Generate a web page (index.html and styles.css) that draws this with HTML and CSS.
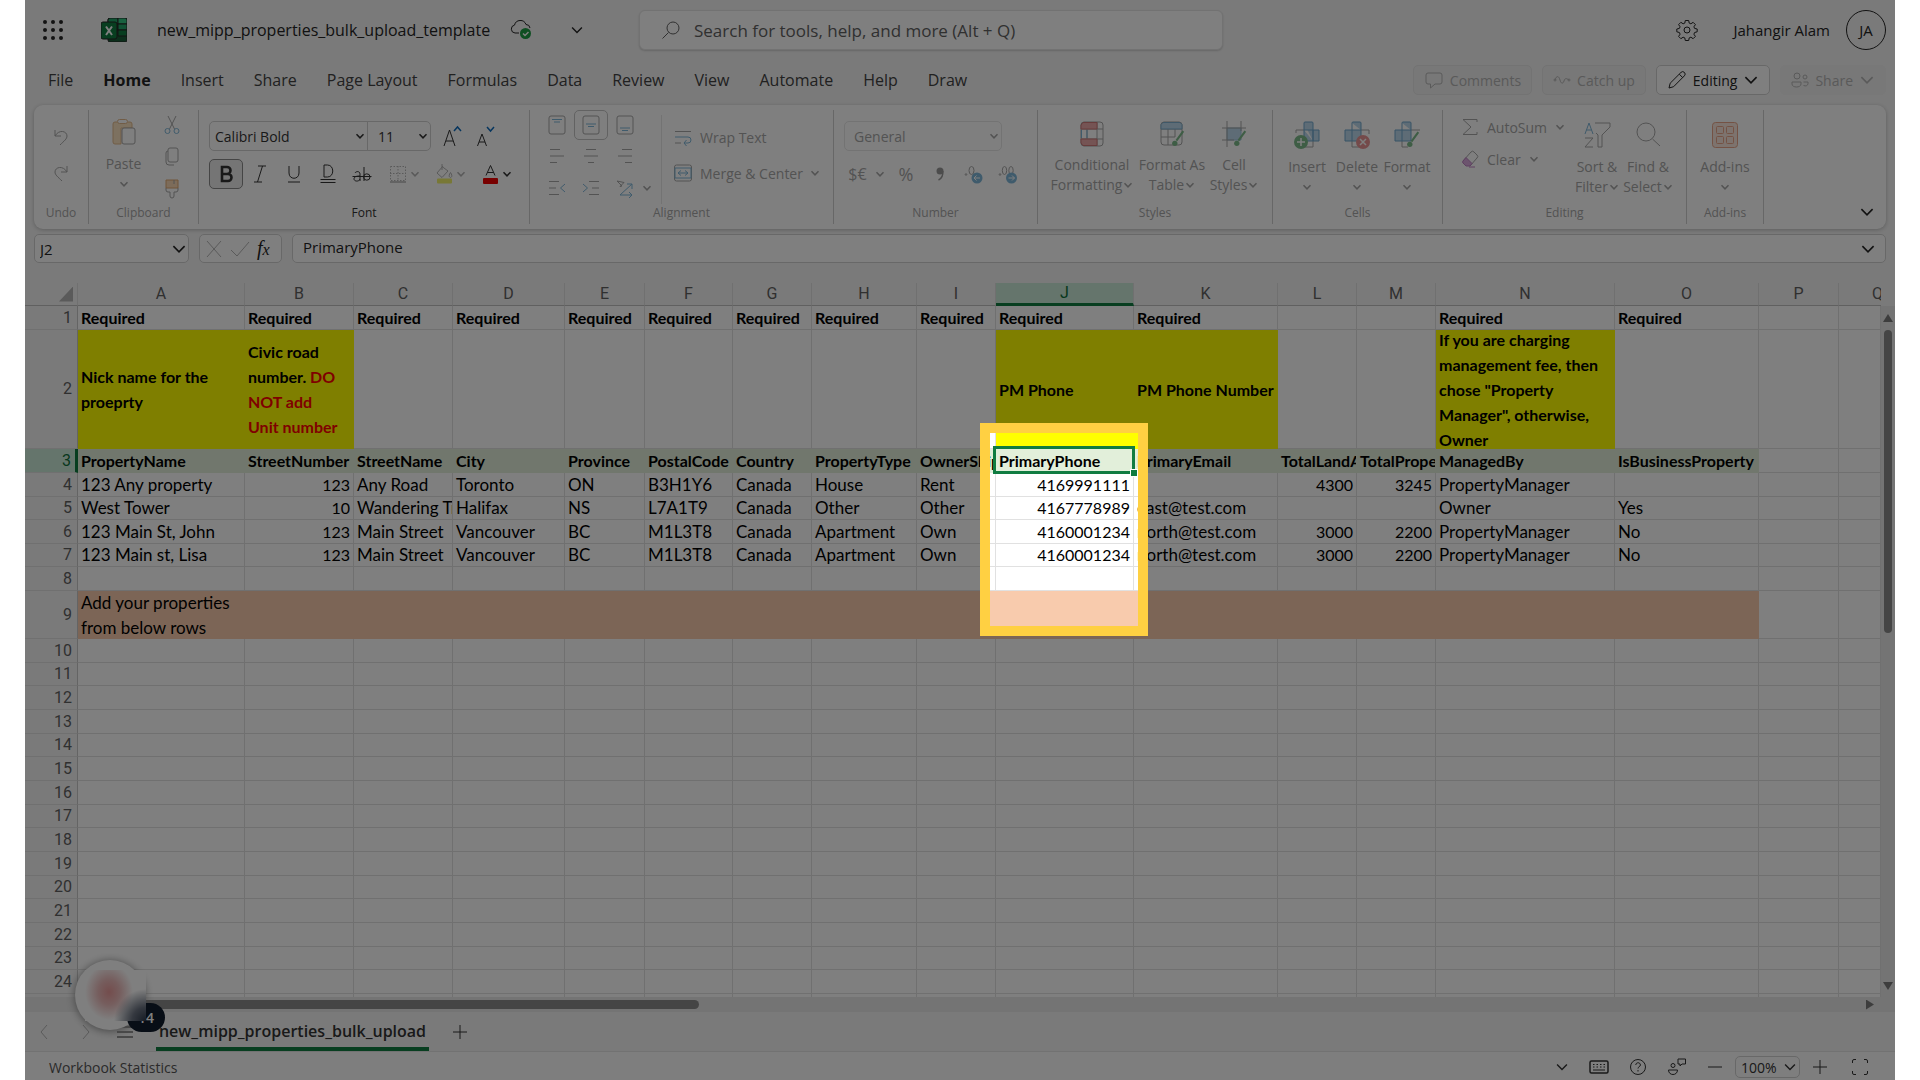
FILE: index.html
```html
<!DOCTYPE html>
<html lang="en">
<head>
  <meta charset="UTF-8" />
  <meta name="viewport" content="width=device-width, initial-scale=1.0" />
  <title>new_mipp_properties_bulk_upload_template</title>
  <link rel="stylesheet" href="styles.css">
</head>
<body>
  <svg class="sprite" aria-hidden="true">
    <symbol id="chev" viewBox="0 0 10 10"><path d="M1.5 3.2 5 6.8 8.500 3.200" /></symbol>
    <symbol id="brush" viewBox="0 0 12 16"><path d="M11 1 4.500 10" stroke="#7dbb8a" stroke-width="2" /><circle cx="3" cy="12.500" r="2.500" fill="#7dbb8a" stroke="none" /></symbol>
  </svg>

  <div class="app">
    <header class="topbar">
      <button class="icon-btn waffle" aria-label="App launcher">
        <svg width="22" height="22" viewBox="0 0 22 22" class="solid"><circle cx="3" cy="3" r="2"/><circle cx="11" cy="3" r="2"/><circle cx="19" cy="3" r="2"/><circle cx="3" cy="11" r="2"/><circle cx="11" cy="11" r="2"/><circle cx="19" cy="11" r="2"/><circle cx="3" cy="19" r="2"/><circle cx="11" cy="19" r="2"/><circle cx="19" cy="19" r="2"/></svg>
      </button>
      <svg class="logo" width="26" height="24" viewBox="0 0 26 24" stroke="none">
        <rect x="7" width="19" height="24" rx="2" fill="#185c37"/>
        <path d="M9 0h8v6H7V2a2 2 0 0 1 2-2z" fill="#21a366"/><path d="M17 0h7a2 2 0 0 1 2 2v4h-9z" fill="#33c481"/>
        <path d="M7 6h10v6H7z" fill="#107c41"/><path d="M17 6h9v6h-9z" fill="#21a366"/><path d="M17 12h9v6h-9z" fill="#107c41"/>
        <rect y="4" width="16" height="17" rx="2" fill="#107c41"/>
        <path d="M5 8.500 11 17M11 8.500 5 17" stroke="#fff" stroke-width="2"/>
      </svg>
      <span class="doc-name">new_mipp_properties_bulk_upload_template</span>
      <svg class="cloud" width="22" height="22" viewBox="0 0 22 22"><path d="M9 14H5a4 4 0 0 1-.5-7.900A6 6 0 0 1 16 5.500 4 4 0 0 1 20 9"/><circle cx="15.500" cy="14.500" r="5.500" fill="#1e9e45" stroke="none"/><path d="m13 14.500 2 2 3.500-3.500" stroke="#fff" stroke-width="1.500"/></svg>
      <button class="icon-btn doc-menu" aria-label="File options"><svg width="14" height="14"><use href="#chev"/></svg></button>
      <label class="search">
        <svg width="20" height="20" viewBox="0 0 20 20"><circle cx="12" cy="8" r="6"/><path d="M7.500 12.500 1.500 18.500"/></svg>
        <input type="text" aria-label="Search" placeholder="Search for tools, help, and more (Alt + Q)">
      </label>
      <button class="icon-btn gear" aria-label="Settings">
        <svg width="22" height="22" viewBox="0 0 22 22"><circle cx="11" cy="11" r="3"/><path d="M9.300 1.500h3.400l.5 2.600 1.700.7 2.200-1.500 2.300 2.300-1.500 2.200.7 1.600 2.600.6v2.800l-2.600.7-.7 1.700 1.500 2.200-2.300 2.300-2.200-1.500-1.700.7-.5 2.600H9.300l-.5-2.600-1.700-.7-2.200 1.500-2.300-2.300 1.500-2.200-.7-1.700-2.600-.7V10l2.600-.6.7-1.600-1.500-2.200 2.300-2.300 2.200 1.500 1.700-.7z" stroke-linejoin="round"/></svg>
      </button>
      <span class="user">Jahangir Alam</span>
      <button class="avatar" aria-label="Account">JA</button>
    </header>

    <nav class="tabs">
      <a href="#">File</a><a href="#" class="active">Home</a><a href="#">Insert</a><a href="#">Share</a><a href="#">Page Layout</a><a href="#">Formulas</a><a href="#">Data</a><a href="#">Review</a><a href="#">View</a><a href="#">Automate</a><a href="#">Help</a><a href="#">Draw</a>
      <div class="tab-actions">
        <button class="off"><svg width="20" height="20" viewBox="0 0 20 20"><path d="M4 3h12a2 2 0 0 1 2 2v7a2 2 0 0 1-2 2h-5l-4.500 4v-4H4a2 2 0 0 1-2-2V5a2 2 0 0 1 2-2z"/></svg>Comments</button>
        <button class="off"><svg width="18" height="18" viewBox="0 0 18 18"><circle cx="2" cy="9" r="1"/><circle cx="16" cy="9" r="1"/><path d="M2 9c1.500-5 4-4 5 0s3 4 4 1 2-3 5-1"/></svg>Catch up</button>
        <button class="editing"><svg width="20" height="20" viewBox="0 0 20 20"><path d="m2 18 1.200-4.800L14 2.400a2.200 2.200 0 0 1 3.400 3.400L6.600 16.700 2 18zM12.300 4.200l3.400 3.400"/></svg>Editing<svg width="16" height="16"><use href="#chev"/></svg></button>
        <button class="off share"><svg width="18" height="18" viewBox="0 0 18 18"><circle cx="6" cy="5" r="3"/><circle cx="14" cy="6" r="2"/><path d="M1 11h9v2c0 4-9 4-9 0zM12.500 11H17v1.500c0 2-2 3-4.500 2"/></svg>Share<svg width="16" height="16"><use href="#chev"/></svg></button>
      </div>
    </nav>

    <section class="ribbon">
      <div class="group g-undo">
        <div class="body">
          <button aria-label="Undo"><svg width="20" height="20" viewBox="0 0 20 20"><path d="M4 3v6h6M4 9c4-7 12-5 12 0 0 3-3 5-7 9"/></svg></button>
          <button aria-label="Redo"><svg width="20" height="20" viewBox="0 0 20 20"><path d="M16 3v6h-6M16 9C12 2 4 4 4 9c0 3 3 5 7 9"/></svg></button>
        </div>
        <h2>Undo</h2>
      </div>

      <div class="group g-clip">
        <div class="body">
          <button class="big"><svg width="26" height="28" viewBox="0 0 26 28"><path d="M6 4H4a2 2 0 0 0-2 2v18a2 2 0 0 0 2 2h6V10h11V6a2 2 0 0 0-2-2h-2" fill="#fbe3c0" stroke="#e3b98c"/><rect x="6.500" y="1.500" width="10" height="4" rx="2" stroke="#e3b98c" fill="#fff"/><rect x="11" y="10" width="13" height="16" rx="2" fill="#fff"/></svg><span>Paste</span><svg class="chev"><use href="#chev"/></svg></button>
          <div class="clip-side">
            <button aria-label="Cut"><svg width="20" height="20" viewBox="0 0 20 20"><path d="M6 1 12.500 14M14 1 7.500 14"/><circle cx="5.500" cy="16" r="2.500" stroke="#7fb6d8"/><circle cx="14.500" cy="16" r="2.500" stroke="#7fb6d8"/></svg></button>
            <button aria-label="Copy"><svg width="20" height="20" viewBox="0 0 20 20"><rect x="6" y="1" width="10" height="14" rx="2"/><path d="M6 4a2 2 0 0 0-2 2v9a3 3 0 0 0 3 3h5"/></svg></button>
            <button aria-label="Format painter"><svg width="20" height="20" viewBox="0 0 20 20"><path d="M4 1h12v8H4z" fill="#fbd9b4" stroke="#e0a870"/><path d="M12 1v4M4 9v2a2 2 0 0 0 2 2h2v4a2 2 0 0 0 4 0v-4h2a2 2 0 0 0 2-2V9"/></svg></button>
          </div>
        </div>
        <h2>Clipboard</h2>
      </div>

      <div class="group g-font">
        <div class="body">
          <div class="line">
            <span class="select font-name"><select aria-label="Font"><option>Calibri Bold</option></select><svg class="chev"><use href="#chev"/></svg></span>
            <span class="select font-size"><select aria-label="Font size"><option>11</option></select><svg class="chev"><use href="#chev"/></svg></span>
            <button aria-label="Grow font"><svg width="22" height="24" viewBox="0 0 22 24"><path d="M3 22 8.500 6 14 22M5 17h7"/><path d="m13 7 3.500-4L20 7" stroke="#0f6cbd" stroke-width="1.500"/></svg></button>
            <button aria-label="Shrink font"><svg width="22" height="24" viewBox="0 0 22 24"><path d="M2.500 22 7 10l4.500 12M4 18h6"/><path d="m12 3 3.500 4L19 3" stroke="#0f6cbd" stroke-width="1.500"/></svg></button>
          </div>
          <div class="line">
            <button class="pressed" aria-label="Bold"><svg width="20" height="20" viewBox="0 0 20 20"><path d="M6 3h5a3.500 3.500 0 0 1 0 7H6zM6 10h6a3.500 3.500 0 0 1 0 7H6z" stroke-width="2.600"/></svg></button>
            <button aria-label="Italic"><svg width="20" height="20" viewBox="0 0 20 20"><path d="M8 2h8M4 18h8M12.500 2 7.500 18"/></svg></button>
            <button aria-label="Underline"><svg width="20" height="20" viewBox="0 0 20 20"><path d="M5 2v7c0 7 10 7 10 0V2M4 18h12"/></svg></button>
            <button aria-label="Double underline"><svg width="20" height="20" viewBox="0 0 20 20"><path d="M6 1h3.500c7 0 7 12 0 12H6zM2.500 15.500h15M2.500 18.500h15"/></svg></button>
            <button aria-label="Strikethrough"><svg width="20" height="20" viewBox="0 0 20 20"><path d="M3 9c1-2 5-2 5 1v7M8 12c-3 0-6 .5-6 3s5 3 6 0M12 3v14"/><circle cx="14.800" cy="13" r="3.200"/><path d="M.5 12.500h19"/></svg></button>
            <button class="off pair" aria-label="Borders"><svg width="20" height="20" viewBox="0 0 20 20"><path d="M2.500 2.500h15v14h-15zM10 2v14M2 9.500h16" stroke-dasharray="1.500 1.500"/><path d="M2 18h16" stroke-width="1.500"/></svg><svg class="chev"><use href="#chev"/></svg></button>
            <button class="off pair" aria-label="Fill color"><svg width="20" height="20" viewBox="0 0 20 20"><path d="m9 2-6 7 5 4.500 6-6.500-6-4.500M8 0v6"/><path d="M16.500 8.500c3 4.500 0 5 0 5s-3-.5 0-5z"/><rect x="3" y="14.500" width="15" height="5" rx="1" fill="#f0f06c" stroke="none"/></svg><svg class="chev"><use href="#chev"/></svg></button>
            <button class="pair" aria-label="Font color"><svg width="20" height="20" viewBox="0 0 20 20"><path d="m6 11.500 4.500-10 4.500 10M7.500 8.500h6"/><rect x="3" y="14" width="15" height="6" rx="1" fill="#f00000" stroke="none"/></svg><svg class="chev"><use href="#chev"/></svg></button>
          </div>
        </div>
        <h2>Font</h2>
      </div>

      <div class="group g-align">
        <div class="body">
          <div class="align-grid">
            <button aria-label="Top align"><svg width="20" height="20" viewBox="0 0 20 20"><rect x="2" y="1" width="16" height="18" rx="2"/><path d="M5 4.500h10M7 7h6" stroke="#7fb6d8"/></svg></button>
            <button class="boxed" aria-label="Middle align"><svg width="20" height="20" viewBox="0 0 20 20"><rect x="2" y="1" width="16" height="18" rx="2"/><path d="M5 9h10M7 11.500h6" stroke="#7fb6d8"/></svg></button>
            <button aria-label="Bottom align"><svg width="20" height="20" viewBox="0 0 20 20"><rect x="2" y="1" width="16" height="18" rx="2"/><path d="M5 13h10M7 15.500h6" stroke="#7fb6d8"/></svg></button>
            <span></span>
            <button aria-label="Align left"><svg width="20" height="20" viewBox="0 0 20 20"><path d="M3 3.500h10M3 10h14M3 16.500h7"/></svg></button>
            <button aria-label="Align center"><svg width="20" height="20" viewBox="0 0 20 20"><path d="M5 3.500h10M3 10h14M7 16.500h6"/></svg></button>
            <button aria-label="Align right"><svg width="20" height="20" viewBox="0 0 20 20"><path d="M7 3.500h10M3 10h14M10 16.500h7"/></svg></button>
            <span></span>
            <button aria-label="Decrease indent"><svg width="20" height="20" viewBox="0 0 20 20"><path d="M2 3.500h10M2 10h7M2 16.500h10"/><path d="m18 6-4.500 4 4.500 4" stroke="#7fb6d8"/></svg></button>
            <button aria-label="Increase indent"><svg width="20" height="20" viewBox="0 0 20 20"><path d="M8 3.500h10M11 10h7M8 16.500h10"/><path d="m2 6 4.500 4L2 14" stroke="#7fb6d8"/></svg></button>
            <button aria-label="Orientation"><svg width="20" height="20" viewBox="0 0 20 20"><path d="m7 8-5-5 7 1.500-4 4z"/><path d="M5 17 17 6M12 6h5v5M5 17h12M14 14l3 3-3 3" stroke="#7fb6d8"/></svg></button>
            <svg class="chev"><use href="#chev"/></svg>
          </div>
          <div class="align-text">
            <button><svg width="20" height="20" viewBox="0 0 20 20"><path d="M2 4.500h16M2 16h6"/><path d="M2 10h13a3 3 0 0 1 0 6h-4M13.500 13 11 16l2.500 3" stroke="#7fb6d8"/></svg>Wrap Text</button>
            <button><svg width="20" height="20" viewBox="0 0 20 20"><rect x="1.500" y="2" width="17" height="16" rx="2"/><path d="M2 5h16v10H2zM5 10h10M8 7.500 5 10l3 2.500M12 7.500l3 2.500-3 2.500" stroke="#7fb6d8"/></svg>Merge &amp; Center<svg class="chev"><use href="#chev"/></svg></button>
          </div>
        </div>
        <h2>Alignment</h2>
      </div>

      <div class="group g-num">
        <div class="body">
          <div class="line"><span class="select num-format"><select aria-label="Number format"><option>General</option></select><svg class="chev"><use href="#chev"/></svg></span></div>
          <div class="line num-line">
            <button class="currency">$€<svg class="chev"><use href="#chev"/></svg></button>
            <button class="pct">%</button>
            <button aria-label="Comma style"><svg width="20" height="20" viewBox="0 0 20 20"><circle cx="10" cy="7" r="3.500" fill="#999" stroke="none"/><path d="M12.800 7c.4 5-1 7.500-4.300 9" stroke="#999" stroke-width="1.500"/></svg></button>
            <button aria-label="Decrease decimal"><svg width="20" height="20" viewBox="0 0 20 20"><circle cx="2" cy="10.500" r=".8"/><ellipse cx="7.500" cy="6.500" rx="2.500" ry="4"/><circle cx="13" cy="14" r="5.500" fill="#7fb6d8" stroke="none"/><path d="M16 14h-6m2.500-2.500L10 14l2.500 2.500" stroke="#fff"/></svg></button>
            <button aria-label="Increase decimal"><svg width="20" height="20" viewBox="0 0 20 20"><circle cx="2" cy="10.500" r=".8"/><ellipse cx="6.500" cy="6.500" rx="2.200" ry="4"/><ellipse cx="13" cy="6.500" rx="2.200" ry="4"/><circle cx="13.500" cy="14" r="5.500" fill="#7fb6d8" stroke="none"/><path d="M10.500 14h6M14 11.500l2.500 2.500-2.500 2.500" stroke="#fff"/></svg></button>
          </div>
        </div>
        <h2>Number</h2>
      </div>

      <div class="group g-styles">
        <div class="body">
          <button class="big w80"><svg width="26" height="26" viewBox="0 0 26 26"><rect x="2" y="1" width="22" height="24" rx="3"/><path d="M8 8v10M18 1v24M2 8h22M2 18h22"/><path d="M4 1.500h14V8H2V4zM2 18h16v6.500H4L2 22z" fill="#eba9a9" stroke="#d07878"/><path d="M2.500 9v8M8 9v8" stroke="#7fb6d8"/></svg><span>Conditional<br>Formatting<svg class="chev"><use href="#chev"/></svg></span></button>
          <button class="big w80"><svg width="26" height="26" viewBox="0 0 26 26"><rect x="2" y="1" width="21" height="23" rx="3"/><path d="M2 8h21M2 16h14M9 8v16M16 8v8"/><path d="M4 1.500h17l2 2V8H2V3.500z" fill="#bcd9ec" stroke="#7fb0d0"/><use href="#brush" x="12" y="9" width="14" height="17"/></svg><span>Format As<br>Table<svg class="chev"><use href="#chev"/></svg></span></button>
          <button class="big w44"><svg width="26" height="26" viewBox="0 0 26 26"><path d="M6 7h14v12H6z" fill="#bcd9ec" stroke="#9cc4de"/><path d="M1 7h24M1 19h12M6 0v26M20 0v10"/><use href="#brush" x="12" y="9" width="14" height="17"/></svg><span>Cell<br>Styles<svg class="chev"><use href="#chev"/></svg></span></button>
        </div>
        <h2>Styles</h2>
      </div>

      <div class="group g-cells">
        <div class="body">
          <button class="big w50"><svg width="28" height="28" viewBox="0 0 28 28"><path d="M3 12V9h8M11 20v6h9v-6"/><path d="M11 2a1 1 0 0 1 1-1h7a1 1 0 0 1 1 1v7h6v11h-6M11 2v18h9M11 9h9v11M20 9v11" fill="#bcd9ec" stroke="#6fa6cc"/><circle cx="8" cy="21" r="7" fill="#7dbb8a" stroke="none"/><path d="M8 17v8M4 21h8" stroke="#fff" stroke-width="1.500"/></svg><span>Insert</span><svg class="chev"><use href="#chev"/></svg></button>
          <button class="big w50"><svg width="28" height="28" viewBox="0 0 28 28"><path d="M18 9h8v4M9 20v6h8"/><path d="M9 2a1 1 0 0 1 1-1h7a1 1 0 0 1 1 1v18H2V9h16M9 2v18" fill="#bcd9ec" stroke="#6fa6cc"/><circle cx="20" cy="21" r="7" fill="#e89595" stroke="none"/><path d="m17 18 6 6M23 18l-6 6" stroke="#fff" stroke-width="1.500"/></svg><span>Delete</span><svg class="chev"><use href="#chev"/></svg></button>
          <button class="big w50"><svg width="28" height="28" viewBox="0 0 28 28"><path d="M18 9h9M9 20v6h6"/><path d="M9 2a1 1 0 0 1 1-1h7a1 1 0 0 1 1 1v18H2V9h16M9 2v18" fill="#bcd9ec" stroke="#6fa6cc"/><use href="#brush" x="13" y="10" width="14" height="17"/></svg><span>Format</span><svg class="chev"><use href="#chev"/></svg></button>
        </div>
        <h2>Cells</h2>
      </div>

      <div class="group g-edit">
        <div class="body">
          <div class="edit-text">
            <button><svg width="18" height="18" viewBox="0 0 18 18"><path d="M16 4V1.500H2L10 9l-8 7.500h14V14"/></svg>AutoSum<svg class="chev"><use href="#chev"/></svg></button>
            <button><svg width="18" height="18" viewBox="0 0 18 18"><path d="m2 11 8-9a2 2 0 0 1 3 0l3 3a2 2 0 0 1 0 3l-7 8"/><path d="m2 11 3-3.500 6 6L9 16H5l-3-3a1.500 1.500 0 0 1 0-2zM8 17h6" fill="#d9a8dc" stroke="#bd80c2"/></svg>Clear<svg class="chev"><use href="#chev"/></svg></button>
          </div>
          <button class="big w50"><svg width="28" height="28" viewBox="0 0 28 28"><path d="M12 2h15v4l-8 8v12h-4V14l-2-2"/><path d="m2 13 4-11 4 11M3.500 9h5" stroke="#7fb6d8"/><path d="M2 17h8L2 26h8"/></svg><span>Sort &amp;<br>Filter<svg class="chev"><use href="#chev"/></svg></span></button>
          <button class="big w50"><svg width="28" height="28" viewBox="0 0 28 28"><circle cx="12" cy="11" r="9"/><path d="m18.500 18 7.500 7"/></svg><span>Find &amp;<br>Select<svg class="chev"><use href="#chev"/></svg></span></button>
        </div>
        <h2>Editing</h2>
      </div>

      <div class="group g-addins">
        <div class="body">
          <button class="big"><svg width="28" height="28" viewBox="0 0 28 28" class="orange"><rect x="1.500" y="1.500" width="25" height="25" rx="3" fill="#fbe6dc"/><rect x="5.500" y="5.500" width="7" height="7" rx="1"/><rect x="15.500" y="5.500" width="7" height="7" rx="1"/><rect x="5.500" y="15.500" width="7" height="7" rx="1"/><rect x="15.500" y="15.500" width="7" height="7" rx="1"/></svg><span>Add-ins</span><svg class="chev"><use href="#chev"/></svg></button>
        </div>
        <h2>Add-ins</h2>
      </div>
      <button class="collapse" aria-label="Ribbon display options"><svg width="16" height="16"><use href="#chev"/></svg></button>
    </section>

    <section class="formula-row">
      <label class="name-box"><input type="text" aria-label="Name box" value="J2"><svg width="16" height="16"><use href="#chev"/></svg></label>
      <div class="fx">
        <button aria-label="Cancel" class="off"><svg width="18" height="18" viewBox="0 0 18 18"><path d="m2 1 14 16M16 1 2 17"/></svg></button>
        <button aria-label="Enter" class="off"><svg width="20" height="18" viewBox="0 0 20 18"><path d="m1 10 6 6L19 2"/></svg></button>
        <button aria-label="Insert function" class="fx-btn">f<sub>x</sub></button>
      </div>
      <label class="formula"><input type="text" aria-label="Formula bar" value="PrimaryPhone"><svg width="16" height="16"><use href="#chev"/></svg></label>
    </section>

    <main class="sheet">
      <div class="grid-wrap">
        <table class="grid">
          <colgroup>
            <col class="c-row"><col class="c-a"><col class="c-b"><col class="c-c"><col class="c-d"><col class="c-e"><col class="c-f"><col class="c-g"><col class="c-h"><col class="c-i"><col class="c-j"><col class="c-k"><col class="c-l"><col class="c-m"><col class="c-n"><col class="c-o"><col class="c-p"><col>
          </colgroup>
          <thead><tr id="cols"><th class="corner"></th></tr></thead>
          <tbody id="rows"></tbody>
        </table>
      </div>
      <div class="vscroll"><i class="tri up"></i><i class="thumb"></i><i class="tri down"></i></div>
    </main>
    <div class="hscroll"><i class="thumb"></i><i class="tri right"></i></div>

    <div class="sheet-tabs">
      <button class="off" aria-label="Previous sheet"><svg width="16" height="16" viewBox="0 0 16 16"><path d="m10 1-6 7 6 7"/></svg></button>
      <button class="off" aria-label="Next sheet"><svg width="16" height="16" viewBox="0 0 16 16"><path d="m6 1 6 7-6 7"/></svg></button>
      <button class="all-sheets" aria-label="All sheets"><svg width="16" height="16" viewBox="0 0 16 16"><path d="M0 3h16M0 8h16M0 13h16"/></svg></button>
      <a href="#" class="sheet-tab">new_mipp_properties_bulk_upload</a>
      <button class="add" aria-label="Add sheet"><svg width="16" height="16" viewBox="0 0 16 16"><path d="M8 1v14M1 8h14"/></svg></button>
    </div>

    <footer class="status">
      <span>Workbook Statistics</span>
      <div class="status-right">
        <button aria-label="More"><svg width="14" height="14"><use href="#chev"/></svg></button>
        <button aria-label="Keyboard"><svg width="20" height="16" viewBox="0 0 20 16"><rect x="1" y="2" width="18" height="12" rx="1.500" stroke-width="1.500"/><path d="M4 5.500h12M4 8h12" stroke-dasharray="1.500 2"/><path d="M4 11h12"/></svg></button>
        <button aria-label="Help"><svg width="18" height="18" viewBox="0 0 18 18"><circle cx="9" cy="9" r="7.500"/><path d="M6.800 7c0-3 4.600-3 4.600 0 0 1.800-2.400 1.600-2.400 3.500M9 12v1.500"/></svg></button>
        <button aria-label="Feedback"><svg width="20" height="18" viewBox="0 0 20 18"><circle cx="6" cy="7.500" r="2"/><path d="M1.500 12h9c0 6-9 6-9 0zM11 1h7.500v5H15l-2 2V6h-2z"/></svg></button>
        <button aria-label="Zoom out"><svg width="16" height="16" viewBox="0 0 16 16"><path d="M1 8h14"/></svg></button>
        <span class="select zoom"><select aria-label="Zoom"><option>100%</option></select><svg width="14" height="14"><use href="#chev"/></svg></span>
        <button aria-label="Zoom in"><svg width="16" height="16" viewBox="0 0 16 16"><path d="M8 1v14M1 8h14"/></svg></button>
        <button aria-label="Full screen" class="full"><svg width="18" height="18" viewBox="0 0 18 18"><path d="M1.500 5V3A1.500 1.500 0 0 1 3 1.500h2M13 1.500h2A1.500 1.500 0 0 1 16.500 3v2M16.500 13v2a1.500 1.500 0 0 1-1.500 1.500h-2M5 16.500H3A1.500 1.500 0 0 1 1.500 15v-2"/></svg></button>
      </div>
    </footer>

    <div class="bubble"><span class="bubble-count">14</span><span class="bubble-blur"></span></div>
    <div class="spotlight"></div>
  </div>

  <script src="script.js"></script>
</body>
</html>
```
FILE: styles.css
```css
* {
  box-sizing: border-box;
}
body {
  margin: 0;
  padding: 0 25px;
  background: #fff;
  font-family: 'Open Sans', 'Noto Sans', sans-serif;
  font-size: 14px;
  color: #242424;
}
svg {
  fill: none;
  stroke: currentColor;
  flex: none;
}
.solid {
  fill: currentColor;
  stroke: none;
}
.sprite {
  display: none;
}
button {
  display: flex;
  align-items: center;
  justify-content: center;
  padding: 0;
  border: none;
  background: none;
  font: inherit;
  color: inherit;
}
input, select {
  border: none;
  background: none;
  font: inherit;
  color: inherit;
  outline: none;
  min-width: 0;
  appearance: none;
}
a {
  color: inherit;
  text-decoration: none;
}
.app {
  position: relative;
  overflow: hidden;
  height: 100vh;
  display: flex;
  flex-direction: column;
  background: #f5f5f5;
}
.chev {
  width: 10px;
  height: 10px;
  stroke-width: 1.5;
}
.off {
  color: #b4b4b4;
}

/* title bar */
.topbar {
  display: flex;
  align-items: center;
  height: 60px;
  padding: 0 9px 0 17px;
}
.logo {
  margin-left: 37px;
}
.doc-name {
  width: 341px;
  margin-left: 30px;
  font-size: 16px;
  white-space: nowrap;
}
.cloud {
  margin-left: 12px;
}
.doc-menu {
  margin-left: 38px;
}
.search {
  display: flex;
  align-items: center;
  gap: 13px;
  width: 584px;
  height: 40px;
  margin-left: 55px;
  padding: 0 21px;
  background: #fff;
  border: 1px solid #e4e4e4;
  border-radius: 6px;
  color: #616161;
  box-shadow: 0 1px 2px #ccc;
}
.search input {
  flex: 1;
  padding: 0;
  font-size: 17px;
}
.search input::placeholder {
  color: #616161;
}
.gear {
  margin-left: auto;
}
.user {
  margin-left: 35px;
  font-size: 15px;
}
.avatar {
  width: 40px;
  height: 40px;
  margin-left: 16px;
  border: 1px solid #242424;
  border-radius: 50%;
  font-size: 15px;
}

/* ribbon tabs */
.tabs {
  display: flex;
  align-items: center;
  gap: 30px;
  height: 45px;
  padding: 0 9px 5px 23px;
  font-size: 16px;
  color: #424242;
}
.tabs .active {
  font-weight: 700;
  color: #242424;
}
.tab-actions {
  display: flex;
  gap: 10px;
  margin-left: auto;
  font-size: 14px;
}
.tab-actions button {
  gap: 6px;
  height: 30px;
  padding: 0 10px;
  border: 1px solid #e6e6e6;
  border-radius: 5px;
  background: #f0f0f0;
}
.tab-actions .editing {
  background: #fff;
  border-color: #d1d1d1;
  color: #242424;
}
.tab-actions .share {
  border-color: #f0f0f0;
}

/* ribbon */
.ribbon {
  display: flex;
  flex: none;
  height: 124px;
  margin: 0 9px;
  padding: 5px 0;
  background: #fff;
  border-radius: 9px;
  box-shadow: 0 1px 4px #bbb;
  color: #a6a6a6;
}
.group {
  display: flex;
  flex-direction: column;
  flex: none;
  border-right: 1px solid #cecece;
}
.group h2 {
  margin: 0 0 2px;
  font-size: 12px;
  line-height: 18px;
  font-weight: 400;
  text-align: center;
}
.body {
  display: flex;
  flex: 1;
}
.g-undo { width: 55px; }
.g-clip { width: 110px; }
.g-font { width: 331px; color: #333; }
.g-align { width: 304px; }
.g-num { width: 204px; }
.g-styles { width: 235px; }
.g-cells { width: 170px; }
.g-edit { width: 244px; }
.g-addins { width: 77px; }

.g-undo .body {
  flex-direction: column;
  align-items: center;
  gap: 16px;
  padding-top: 17px;
}
.g-clip .body {
  gap: 18px;
  padding-left: 14px;
}
.big {
  flex-direction: column;
  justify-content: flex-start;
  padding-top: 11px;
  font-size: 14px;
  line-height: 20px;
  white-space: nowrap;
}
.big > svg:first-child {
  margin-bottom: 8px;
}
.big .chev {
  margin-left: 1px;
}
.big > .chev {
  margin: 5px 0 0;
}
.g-clip .big {
  width: 41px;
  padding-top: 8px;
}
.clip-side {
  display: flex;
  flex-direction: column;
  gap: 12px;
  padding-top: 5px;
}

.g-font .body, .g-num .body {
  flex-direction: column;
  gap: 8px;
  padding: 11px 0 0 10px;
}
.line {
  display: flex;
  align-items: center;
  height: 30px;
}
.line button {
  width: 34px;
  height: 30px;
}
.line .pair {
  width: 46px;
  gap: 2px;
  padding-left: 4px;
}
.line .pressed {
  background: #ebebeb;
  border: 1px solid #8a8a8a;
  border-radius: 5px;
}
.select {
  display: grid;
  align-items: center;
  height: 30px;
  border: 1px solid #d1d1d1;
}
.select select, .select svg {
  grid-area: 1 / 1;
}
.select select {
  width: 100%;
  padding: 0 5px;
  font-size: 14px;
}
.select svg {
  justify-self: end;
  margin-right: 2px;
  pointer-events: none;
}
.font-name {
  width: 159px;
  border-radius: 5px 0 0 5px;
}
.font-size {
  width: 64px;
  margin: 0 4px 0 -1px;
  border-radius: 0 5px 5px 0;
}
.font-size select {
  padding-left: 10px;
}

.g-align .body {
  padding-left: 10px;
}
.align-grid {
  display: grid;
  grid-template-columns: 34px 34px 34px 10px;
  grid-template-rows: 30px 32px 32px;
  align-items: center;
  justify-items: center;
  width: 121px;
}
.align-grid .boxed {
  width: 34px;
  height: 30px;
  border: 1px solid #c4c4c4;
  border-radius: 5px;
}
.align-text {
  display: flex;
  flex-direction: column;
  align-items: flex-start;
  gap: 16px;
  margin-top: 5px;
  padding: 12px 0 0 11px;
  border-left: 1px solid #e6e6e6;
}
.align-text button, .edit-text button {
  gap: 8px;
  height: 20px;
}
.align-text button {
  gap: 7px;
}

.num-format {
  width: 158px;
  border-color: #e6e6e6;
  border-radius: 5px;
}
.num-format select {
  padding-left: 9px;
}
.num-line .currency {
  width: 45px;
  gap: 8px;
  font-size: 16px;
}
.num-line .pct {
  font-size: 18px;
}

.w80 { width: 80px; }
.w50 { width: 50px; }
.w44 { width: 44px; }
.g-styles .body { padding-left: 14px; }
.g-cells .body { padding-left: 9px; }
.g-edit .body { padding-left: 18px; }
.g-addins .big { width: 100%; }
.g-edit .big { margin-left: 1px; }
.orange { stroke: #e8a588; }
.edit-text {
  display: flex;
  flex-direction: column;
  align-items: flex-start;
  gap: 12px;
  width: 110px;
  padding-top: 7px;
}
.collapse {
  align-self: flex-end;
  margin: 0 11px 4px auto;
  color: #242424;
}

/* formula bar */
.formula-row {
  display: flex;
  flex: none;
  gap: 10px;
  height: 29px;
  margin: 5px 9px 20px;
}
.name-box, .fx, .formula {
  display: flex;
  align-items: center;
  background: #fff;
  border: 1px solid #d1d1d1;
  border-radius: 5px;
}
.name-box {
  width: 155px;
  padding: 0 1px 0 5px;
}
.name-box input, .formula input {
  flex: 1;
  padding: 0;
  font-size: 15px;
}
.fx {
  gap: 7px;
  width: 83px;
  padding: 0 5px;
}
.fx-btn {
  align-items: baseline;
  font: italic 20px 'Liberation Serif', serif;
}
.fx-btn sub {
  font-size: 16px;
}
.formula {
  flex: 1;
  padding: 0 9px 0 10px;
}
.formula input {
  padding-bottom: 3px;
  font-size: 15px;
}

/* grid */
.sheet {
  display: flex;
  flex: 1;
  min-height: 0;
}
.grid-wrap {
  flex: 1;
  overflow: hidden;
  background: #fff;
}
.grid {
  width: 100%;
  table-layout: fixed;
  border-collapse: separate;
  border-spacing: 0;
  font-family: Lato, sans-serif;
  font-size: 17px;
  line-height: 22px;
  color: #000;
}
.c-row { width: 53px; }
.c-a { width: 167px; }
.c-b { width: 109px; }
.c-c { width: 99px; }
.c-d { width: 112px; }
.c-e, .c-p { width: 80px; }
.c-f { width: 88px; }
.c-g, .c-i, .c-l, .c-m { width: 79px; }
.c-h { width: 105px; }
.c-j { width: 138px; }
.c-k, .c-o { width: 144px; }
.c-n { width: 179px; }
.grid th {
  padding: 0;
  background: #f5f5f5;
  font-family: Roboto, sans-serif;
  font-size: 16px;
  font-weight: 400;
  color: #616161;
}
.grid thead th {
  height: 23px;
  line-height: 20px;
  border-right: 1px solid #e1e1e1;
  border-bottom: 1px solid #c0c0c0;
  overflow: hidden;
}
.grid thead th:last-child {
  padding-left: 33px;
  border-right: none;
}
.grid thead .sel {
  background: #caead8;
  border-bottom: 3px solid #107c41;
  color: #0f703b;
}
.corner::after {
  content: "";
  display: block;
  width: 14px;
  height: 15px;
  margin-left: 34px;
  background: #b4b4b4;
  clip-path: polygon(100% 0, 100% 100%, 0 100%);
}
.grid tbody th {
  padding-right: 5px;
  text-align: right;
  border-right: 1px solid #c8c8c8;
  border-bottom: 1px solid #e1e1e1;
}
.grid tbody th.sel {
  background: #caead8;
  border-right: 3px solid #107c41;
  padding-right: 4px;
  color: #0f703b;
}
.grid td {
  padding: 0 2px 0 3px;
  border-right: 1px solid #e1e1e1;
  border-bottom: 1px solid #e1e1e1;
  overflow: hidden;
  white-space: nowrap;
}
.grid tbody tr {
  height: 24px;
}
.grid tbody tr:nth-child(3n+5), .grid tbody tr:nth-child(7) {
  height: 23px;
}
.grid tbody tr:nth-child(8) {
  height: 24px;
}
.grid td.num {
  text-align: right;
  padding-right: 3px;
  font-size: 16px;
}
.grid .bold td {
  font-size: 16px;
  font-weight: 700;
}
.wrap {
  display: flex;
  align-items: center;
  white-space: normal;
  line-height: 25px;
}
.wrap.one-line {
  white-space: nowrap;
}
.tall .wrap {
  height: 118px;
}
.note .wrap {
  height: 47px;
}
.grid td.yellow {
  background: #ff0;
  border-color: #ff0;
}
.grid .names td:nth-child(-n+16) {
  background: #e2efda;
  border-color: #e2efda;
}
.grid .note td:nth-child(-n+16) {
  background: #f8cbad;
  border-color: #f8cbad;
}
.red {
  color: #f00;
}
.grid td.selected {
  position: relative;
  overflow: visible;
}
.selected::before {
  content: "";
  position: absolute;
  inset: -3px -2px -2px -3px;
  border: 3px solid #107c41;
}
.selected::after {
  content: "";
  position: absolute;
  right: -4px;
  bottom: -4px;
  width: 6px;
  height: 6px;
  background: #107c41;
  outline: 1px solid #fff;
}

/* scroll bars */
.vscroll {
  display: flex;
  flex-direction: column;
  align-items: center;
  width: 14px;
  margin-top: 23px;
  padding: 8px 0 7px;
  background: #e8e8e8;
}
.thumb {
  background: #8a8a8a;
  border-radius: 5px;
}
.vscroll .thumb {
  width: 8px;
  height: 303px;
  margin-top: 8px;
}
.tri {
  width: 10px;
  height: 8px;
  background: #7a7a7a;
}
.up { clip-path: polygon(50% 0, 100% 100%, 0 100%); }
.down { clip-path: polygon(0 0, 100% 0, 50% 100%); margin-top: auto; }
.right {
  width: 8px;
  height: 10px;
  margin-left: auto;
  clip-path: polygon(0 0, 100% 50%, 0 100%);
}
.hscroll {
  display: flex;
  align-items: center;
  flex: none;
  height: 15px;
  padding: 0 21px 0 72px;
  background: #e8e8e8;
}
.hscroll .thumb {
  width: 602px;
  height: 9px;
}

/* sheet tabs */
.sheet-tabs {
  display: flex;
  align-items: center;
  flex: none;
  height: 39px;
  padding-left: 12px;
  color: #333;
}
.sheet-tabs button + button {
  margin-left: 24px;
}
.sheet-tab {
  display: flex;
  align-items: center;
  justify-content: center;
  min-width: 273px;
  height: 39px;
  margin: 0 23px;
  padding-top: 3px;
  border-bottom: 4px solid #107c41;
  font-size: 16px;
  font-weight: 600;
}

/* status bar */
.status {
  display: flex;
  align-items: center;
  flex: none;
  height: 29px;
  padding: 2px 26px 0 24px;
  background: #fcfcfc;
  border-top: 1px solid #e4e4e4;
  color: #555;
}
.status-right {
  display: flex;
  align-items: center;
  gap: 20px;
  margin-left: auto;
  color: #333;
}
.zoom {
  width: 65px;
  height: 22px;
  margin: 0 -8px;
  border-radius: 5px;
}
.full {
  margin-left: 3px;
}

/* recorder bubble */
.bubble {
  position: absolute;
  left: 50px;
  bottom: 50px;
  width: 70px;
  height: 70px;
  border-radius: 50%;
  background: #fff;
  box-shadow: 0 1px 8px #888;
}
.bubble-count {
  position: absolute;
  left: 52px;
  top: 43px;
  width: 38px;
  height: 29px;
  border-radius: 15px;
  background: #101c2c;
  color: #fff;
  font-weight: 600;
  line-height: 29px;
  text-align: center;
}
.bubble-blur {
  position: absolute;
  left: 10px;
  top: 10px;
  width: 61px;
  height: 51px;
  background:
    radial-gradient(circle at 100% 100%, #2c3648 0, #6a7280 14px, transparent 32px),
    radial-gradient(ellipse 24px 28px at 24px 22px, #e89a9a 0, #ecbcbc 45%, transparent 100%),
    #fff;
}

/* tour step: dims all but the framed column */
.spotlight {
  position: absolute;
  left: 955px;
  top: 423px;
  width: 168px;
  height: 213px;
  border: 10px solid #ffd042;
  box-shadow: 0 0 0 3000px rgba(0, 0, 0, 0.5);
}
```
FILE: script.js
```js
const letters = "ABCDEFGHIJKLMNOPQ".split("");
const rowCount = 25;

// row number -> cell texts, left to right
const data = {
  1: ["Required", "Required", "Required", "Required", "Required", "Required", "Required", "Required", "Required", "Required", "Required", "", "", "Required", "Required"],
  2: ["Nick name for the proeprty", 'Civic road number. <span class="red">DO NOT add<br>Unit number</span>', "", "", "", "", "", "", "", "PM Phone", "PM Phone Number", "", "", 'If you are charging management fee, then chose "Property Manager", otherwise, Owner'],
  3: ["PropertyName", "StreetNumber", "StreetName", "City", "Province", "PostalCode", "Country", "PropertyType", "OwnerShip", "PrimaryPhone", "PrimaryEmail", "TotalLandArea", "TotalPropertyArea", "ManagedBy", "IsBusinessProperty"],
  4: ["123 Any property", "123", "Any Road", "Toronto", "ON", "B3H1Y6", "Canada", "House", "Rent", "4169991111", "", "4300", "3245", "PropertyManager"],
  5: ["West Tower", "10", "Wandering Trail", "Halifax", "NS", "L7A1T9", "Canada", "Other", "Other", "4167778989", "east@test.com", "", "", "Owner", "Yes"],
  6: ["123 Main St, John", "123", "Main Street", "Vancouver", "BC", "M1L3T8", "Canada", "Apartment", "Own", "4160001234", "north@test.com", "3000", "2200", "PropertyManager", "No"],
  7: ["123 Main st, Lisa", "123", "Main Street", "Vancouver", "BC", "M1L3T8", "Canada", "Apartment", "Own", "4160001234", "north@test.com", "3000", "2200", "PropertyManager", "No"],
  9: ["Add your properties from below rows"]
};
const rowClass = { 1: "bold", 2: "bold tall", 3: "bold names", 9: "note" };
const yellow = ["A", "B", "J", "K", "N"];

const cols = document.getElementById("cols");
letters.forEach((l) => {
  const th = document.createElement("th");
  th.textContent = l;
  if (l === "J") th.className = "sel";
  cols.appendChild(th);
});

const rows = document.getElementById("rows");
for (let r = 1; r <= rowCount; r++) {
  const tr = document.createElement("tr");
  tr.className = rowClass[r] || "";
  const th = document.createElement("th");
  th.textContent = r < rowCount ? r : "";
  if (r === 3) th.className = "sel";
  tr.appendChild(th);

  letters.forEach((l, i) => {
    const td = document.createElement("td");
    const text = (data[r] && data[r][i]) || "";
    if ((r === 2 || r === 9) && text) {
      td.innerHTML = `<div class="wrap${l === "K" ? " one-line" : ""}"><div>${text}</div></div>`;
    } else {
      td.textContent = text;
    }
    if (r > 3 && /^\d+$/.test(text)) td.classList.add("num");
    if (r === 2 && yellow.includes(l)) td.classList.add("yellow");
    if (r === 3 && l === "J") td.classList.add("selected");
    tr.appendChild(td);
  });
  rows.appendChild(tr);
}
```
